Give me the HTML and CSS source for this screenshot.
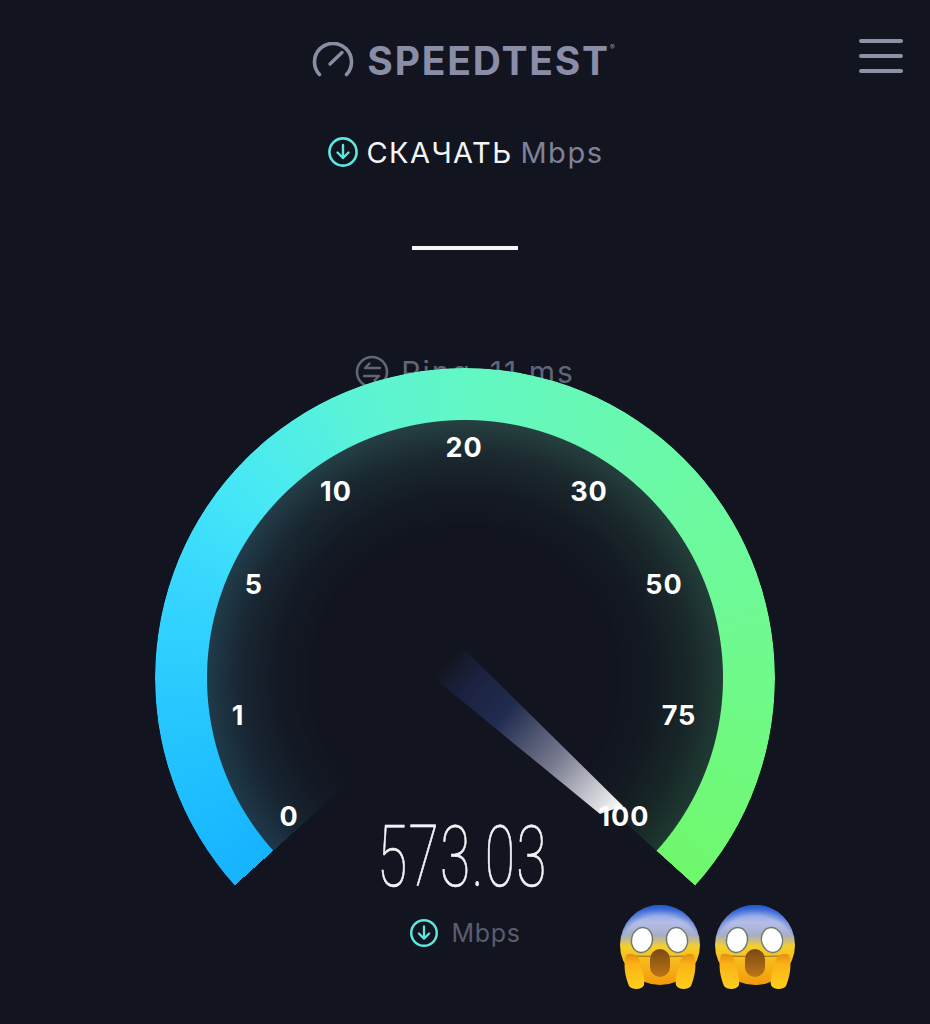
FILE: index.html
```html
<!DOCTYPE html>
<html>
<head>
    <title>Speedtest</title>
    <link rel="stylesheet" href="styles.css">
</head>
<body>
    <div class="page">
        <header class="topbar">
            <div class="logo">
                <svg class="logo-icon" width="42" height="36" viewBox="0 0 42 36">
                    <path d="M7.5 32.5 A18.5 18.5 0 1 1 34.5 32.5" fill="none" stroke="#8b8da6" stroke-width="3.6" stroke-linecap="round"/>
                    <path d="M18 22 L30 10.5" fill="none" stroke="#8b8da6" stroke-width="3.4" stroke-linecap="round"/>
                </svg>
                <span class="logo-text">SPEEDTEST</span><span class="logo-mark">®</span>
            </div>
            <div class="menu">
                <span></span>
                <span></span>
                <span></span>
            </div>
        </header>

        <div class="mode">
            <svg class="arrow-icon" width="32" height="32" viewBox="0 0 32 32">
                <circle cx="16" cy="16" r="13.6" fill="none" stroke="#5fe6de" stroke-width="2.6"/>
                <path d="M16 9 V22 M10.5 16.5 L16 22 L21.5 16.5" fill="none" stroke="#5fe6de" stroke-width="2.4" stroke-linecap="round" stroke-linejoin="round"/>
            </svg>
            <span class="mode-name">СКАЧАТЬ</span>
            <span class="mode-unit">Mbps</span>
        </div>

        <div class="result-line"></div>

        <div class="ping">
            <svg width="34" height="34" viewBox="0 0 34 34">
                <circle cx="17" cy="17" r="15" fill="none" stroke="#62657a" stroke-width="2.6"/>
                <path d="M25 13 H10 L14.5 8.5 M9 21 H24 L19.500 25.500" fill="none" stroke="#62657a" stroke-width="2.4" stroke-linecap="round" stroke-linejoin="round"/>
            </svg>
            <span class="ping-label">Ping</span>
            <span>11 ms</span>
        </div>

        <div class="gauge">
            <div class="gauge-glow"></div>
            <div class="gauge-arc"></div>
            <svg class="needle" width="620" height="620" viewBox="0 0 620 620">
                <defs>
                    <linearGradient id="needleFill" gradientUnits="userSpaceOnUse" x1="292" y1="295" x2="460" y2="440">
                        <stop offset="0" stop-color="#1e2748" stop-opacity="0"/>
                        <stop offset="0.15" stop-color="#1b2140"/>
                        <stop offset="0.35" stop-color="#222c50"/>
                        <stop offset="0.65" stop-color="#74778c"/>
                        <stop offset="1" stop-color="#f4f4f4"/>
                    </linearGradient>
                </defs>
                <polygon points="279,310 306,278 468,438 445,446" fill="url(#needleFill)"/>
            </svg>
            <span class="tick tick-0">0</span>
            <span class="tick tick-1">1</span>
            <span class="tick tick-5">5</span>
            <span class="tick tick-10">10</span>
            <span class="tick tick-20">20</span>
            <span class="tick tick-30">30</span>
            <span class="tick tick-50">50</span>
            <span class="tick tick-75">75</span>
            <span class="tick tick-100">100</span>
            <div class="readout">
                <div class="speed">573.03</div>
                <div class="speed-unit">
                    <svg width="30" height="30" viewBox="0 0 32 32">
                        <circle cx="16" cy="16" r="13.6" fill="none" stroke="#5fe6de" stroke-width="2.6"/>
                        <path d="M16 9 V22 M10.5 16.5 L16 22 L21.5 16.5" fill="none" stroke="#5fe6de" stroke-width="2.4" stroke-linecap="round" stroke-linejoin="round"/>
                    </svg>
                    <span>Mbps</span>
                </div>
            </div>
        </div>

        <div class="emojis">
            <svg width="82" height="88" viewBox="0 0 82 88">
                <defs>
                    <linearGradient id="faceFill" x1="0" y1="0" x2="0" y2="1">
                        <stop offset="0" stop-color="#2f62d6"/>
                        <stop offset="0.1" stop-color="#8ea6e6"/>
                        <stop offset="0.22" stop-color="#b4bde8"/>
                        <stop offset="0.38" stop-color="#a7aec8"/>
                        <stop offset="0.52" stop-color="#f6cf2a"/>
                        <stop offset="0.8" stop-color="#f7ae14"/>
                        <stop offset="1" stop-color="#ef9a0c"/>
                    </linearGradient>
                    <radialGradient id="faceRim" cx="0.5" cy="0.7" r="0.7">
                        <stop offset="0.8" stop-color="#2f62d6" stop-opacity="0"/>
                        <stop offset="1" stop-color="#2558d0"/>
                    </radialGradient>
                    <linearGradient id="handFill" x1="0" y1="0" x2="0" y2="1">
                        <stop offset="0" stop-color="#e58f10"/>
                        <stop offset="0.3" stop-color="#fbb316"/>
                        <stop offset="1" stop-color="#ffcf1e"/>
                    </linearGradient>
                    <linearGradient id="mouthFill" x1="0" y1="0" x2="0" y2="1">
                        <stop offset="0" stop-color="#7a4a14"/>
                        <stop offset="1" stop-color="#bd7414"/>
                    </linearGradient>
                    <g id="scream">
                        <circle cx="41" cy="41" r="40" fill="url(#faceFill)"/>
                        <circle cx="41" cy="41" r="40" fill="url(#faceRim)"/>
                        <path d="M9 52 Q41 53 73 52" fill="none" stroke="#7c5a18" stroke-width="0.8"/>
                        <ellipse cx="23" cy="36" rx="10.500" ry="12.500" transform="rotate(12 23 36)" fill="#fff" stroke="#6f7a70" stroke-width="1.4"/>
                        <ellipse cx="58" cy="36" rx="10.500" ry="12.500" transform="rotate(-12 58 36)" fill="#fff" stroke="#6f7a70" stroke-width="1.4"/>
                        <rect x="31" y="45" width="20" height="28" rx="10" fill="url(#mouthFill)"/>
                        <path d="M7 51 C12 48 19 51 21 58 C24 68 26 76 25 81 C23 86 13 86 10 82 C6 72 4 61 7 51 Z" fill="url(#handFill)"/>
                        <path d="M75 51 C70 48 63 51 61 58 C58 68 56 76 57 81 C59 86 69 86 72 82 C76 72 78 61 75 51 Z" fill="url(#handFill)"/>
                    </g>
                </defs>
                <use href="#scream"/>
            </svg>
            <svg width="82" height="88" viewBox="0 0 82 88"><use href="#scream"/></svg>
        </div>
    </div>
</body>
</html>
```

FILE: styles.css
```css
* {
    box-sizing: border-box;
}

html, body {
    margin: 0;
    background-color: #12151f;
}

.page {
    position: relative;
    width: 930px;
    height: 1024px;
    overflow: hidden;
    background-color: #12151f;
    font-family: Inter, "Liberation Sans", sans-serif;
}

.topbar {
    position: relative;
    display: flex;
    justify-content: center;
    padding-top: 41px;
    padding-right: 3px;
    height: 136px;
}

.logo {
    display: flex;
    align-items: flex-start;
    height: 40px;
}

.logo-icon {
    margin-top: 1px;
    margin-right: 13px;
}

.logo-text {
    font-size: 39px;
    line-height: 40px;
    font-weight: 700;
    letter-spacing: 1.8px;
    color: #8b8da6;
}

.logo-mark {
    font-size: 7px;
    line-height: 14px;
    color: #8b8da6;
}

.menu {
    position: absolute;
    top: 39px;
    right: 27px;
    display: flex;
    flex-direction: column;
    gap: 11px;
    width: 44px;
}

.menu span {
    display: block;
    height: 4px;
    border-radius: 2px;
    background-color: #8f91a8;
}

.mode {
    display: flex;
    align-items: center;
    justify-content: center;
    gap: 8px;
    height: 32px;
    font-size: 29px;
}

.mode-name {
    letter-spacing: 1.4px;
    color: #f4f5f7;
}

.mode-unit {
    letter-spacing: 1.5px;
    color: #7f8197;
}

.result-line {
    width: 106px;
    height: 4px;
    margin: 78px auto 0;
    background-color: #f4f5f7;
}

.ping {
    display: flex;
    align-items: center;
    justify-content: center;
    gap: 12px;
    height: 34px;
    margin-top: 105px;
    font-size: 30px;
    letter-spacing: 2px;
    color: #62657a;
}

.ping-label {
    margin-right: 6px;
}

.gauge {
    position: relative;
    width: 620px;
    height: 620px;
    margin: -21px auto 0;
}

.gauge-arc,
.gauge-glow {
    position: absolute;
    border-radius: 50%;
}

.gauge-arc {
    inset: 0;
    background: conic-gradient(from 228deg,
        #16b3ff 0deg,
        #24c4ff 30deg,
        #36d6ff 60deg,
        #46e8f6 82deg,
        #5bf3d6 110deg,
        #62f7c4 132deg,
        #6bf9a8 175deg,
        #6ffa8c 220deg,
        #6ff86c 264deg,
        transparent 264.1deg);
    -webkit-mask: radial-gradient(circle closest-side, transparent 257.5px, #000 258.5px);
    mask: radial-gradient(circle closest-side, transparent 257.5px, #000 258.5px);
}

.gauge-glow {
    inset: 50px;
    background: conic-gradient(from 228deg,
        #1f3a4c 0deg,
        #223e4c 70deg,
        #284343 132deg,
        #243f3a 200deg,
        #1e3a30 264deg,
        transparent 264.1deg);
    -webkit-mask: radial-gradient(circle closest-side, transparent 150px, rgba(0, 0, 0, 0.12) 185px, rgba(0, 0, 0, 0.45) 225px, #000 260px);
    mask: radial-gradient(circle closest-side, transparent 150px, rgba(0, 0, 0, 0.12) 185px, rgba(0, 0, 0, 0.45) 225px, #000 260px);
}

.needle {
    position: absolute;
    top: 0;
    left: 0;
}

.tick {
    position: absolute;
    width: 70px;
    margin-left: -35px;
    margin-top: -15px;
    text-align: center;
    font-size: 27px;
    line-height: 32px;
    font-weight: 700;
    letter-spacing: 1px;
    color: #fff;
}

.tick-0 { left: 134px; top: 448px; }
.tick-1 { left: 83px; top: 347px; }
.tick-5 { left: 99px; top: 216px; }
.tick-10 { left: 181px; top: 123px; }
.tick-20 { left: 309px; top: 79px; }
.tick-30 { left: 434px; top: 123px; }
.tick-50 { left: 509px; top: 216px; }
.tick-75 { left: 524px; top: 347px; }
.tick-100 { left: 469px; top: 448px; }

.readout {
    position: absolute;
    top: 444px;
    left: 0;
    right: 0;
    display: flex;
    flex-direction: column;
    align-items: center;
}

.speed {
    font-family: Roboto, sans-serif;
    font-size: 85px;
    line-height: 90px;
    font-weight: 100;
    letter-spacing: 2px;
    color: #f2f3f6;
    -webkit-text-stroke: 0.7px #f2f3f6;
    transform: translateX(-3px) scaleX(0.65);
}

.speed-unit {
    display: flex;
    align-items: center;
    gap: 12px;
    margin-top: 16px;
    font-size: 25px;
    letter-spacing: 0.7px;
    color: #5a5d70;
}

.emojis {
    position: absolute;
    left: 619px;
    top: 904px;
    display: flex;
    gap: 13px;
}
```
